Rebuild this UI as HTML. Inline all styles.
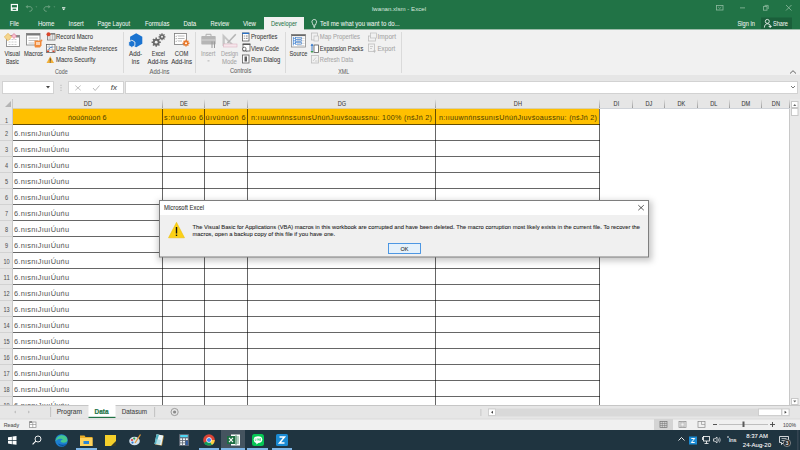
<!DOCTYPE html>
<html><head><meta charset="utf-8"><style>
*{margin:0;padding:0}
html,body{width:800px;height:450px;overflow:hidden;background:#fff;font-family:"Liberation Sans",sans-serif}
text{font-family:"Liberation Sans",sans-serif}
</style></head><body>
<svg width="800" height="450" viewBox="0 0 800 450" style="position:absolute;left:0;top:0">
<rect x="0" y="0" width="800" height="29" fill="#217346" />
<rect x="0" y="29" width="800" height="1" fill="#9dbcaa" />
<g transform="translate(10.8,3.9)"><rect x="0" y="0" width="7.2" height="7" fill="#fff"/><rect x="1.1" y="1.2" width="5" height="2.3" fill="#217346"/><rect x="1.8" y="4.8" width="3.6" height="1.2" fill="#217346"/></g>
<g transform="translate(25.5,4.5)"><path d="M1.8 2.2 H4.5 C7.3 2.2 7.6 6.8 4.3 6.8 H3.8" fill="none" stroke="#6aa07f" stroke-width="1"/><path d="M0 2.2 L2.3 0.4 V4z" fill="#6aa07f"/></g>
<g transform="translate(35.5,6.5)"><path d="M0 0 H1.8 L0.9 1z" fill="#6aa07f"/></g>
<g transform="translate(43,4.5)"><path d="M5.8 2.2 H3.1 C0.3 2.2 0 6.8 3.3 6.8 H3.8" fill="none" stroke="#6aa07f" stroke-width="1"/><path d="M7.6 2.2 L5.3 0.4 V4z" fill="#6aa07f"/></g>
<g transform="translate(53.5,6.5)"><path d="M0 0 H1.8 L0.9 1z" fill="#6aa07f"/></g>
<g transform="translate(62,7)"><rect x="0" y="0" width="3.4" height="0.7" fill="#fff"/><path d="M0 1.5 H3.4 L1.7 3.2z" fill="#fff"/></g>
<text x="372" y="11" font-size="6" fill="#d9e8df"  font-weight="normal" font-family="Liberation Sans" textLength="54" lengthAdjust="spacingAndGlyphs" >lwanan.xlsm - Excel</text>
<g transform="translate(716,5)"><rect x="0.5" y="0.5" width="6.5" height="4.5" fill="none" stroke="#8fbba0" stroke-width="0.8"/><path d="M2.2 2 L3.75 3.5 L5.3 2" fill="none" stroke="#8fbba0" stroke-width="0.7"/></g>
<rect x="740" y="7.5" width="5" height="0.8" fill="#8fbba0" />
<g transform="translate(763,5)"><rect x="0.4" y="1.6" width="3.6" height="3.6" fill="none" stroke="#8fbba0" stroke-width="0.8"/><path d="M1.6 0.4 H5.2 V4" fill="none" stroke="#8fbba0" stroke-width="0.8"/></g>
<g transform="translate(786,5)"><path d="M0 0 L5.5 5.5 M5.5 0 L0 5.5" stroke="#8fbba0" stroke-width="0.8"/></g>
<text x="9.8" y="25.9" font-size="6.3" fill="#f2f7f4" stroke="#f2f7f4" stroke-width="0.03" font-weight="normal" font-family="Liberation Sans" textLength="9.2" lengthAdjust="spacingAndGlyphs" >File</text>
<text x="37.9" y="25.9" font-size="6.3" fill="#f2f7f4" stroke="#f2f7f4" stroke-width="0.03" font-weight="normal" font-family="Liberation Sans" textLength="16.5" lengthAdjust="spacingAndGlyphs" >Home</text>
<text x="68.6" y="25.9" font-size="6.3" fill="#f2f7f4" stroke="#f2f7f4" stroke-width="0.03" font-weight="normal" font-family="Liberation Sans" textLength="15.100000000000009" lengthAdjust="spacingAndGlyphs" >Insert</text>
<text x="97.5" y="25.9" font-size="6.3" fill="#f2f7f4" stroke="#f2f7f4" stroke-width="0.03" font-weight="normal" font-family="Liberation Sans" textLength="32.5" lengthAdjust="spacingAndGlyphs" >Page Layout</text>
<text x="144.9" y="25.9" font-size="6.3" fill="#f2f7f4" stroke="#f2f7f4" stroke-width="0.03" font-weight="normal" font-family="Liberation Sans" textLength="24.5" lengthAdjust="spacingAndGlyphs" >Formulas</text>
<text x="183.4" y="25.9" font-size="6.3" fill="#f2f7f4" stroke="#f2f7f4" stroke-width="0.03" font-weight="normal" font-family="Liberation Sans" textLength="12.799999999999983" lengthAdjust="spacingAndGlyphs" >Data</text>
<text x="210.5" y="25.9" font-size="6.3" fill="#f2f7f4" stroke="#f2f7f4" stroke-width="0.03" font-weight="normal" font-family="Liberation Sans" textLength="18.69999999999999" lengthAdjust="spacingAndGlyphs" >Review</text>
<text x="242.9" y="25.9" font-size="6.3" fill="#f2f7f4" stroke="#f2f7f4" stroke-width="0.03" font-weight="normal" font-family="Liberation Sans" textLength="13.099999999999994" lengthAdjust="spacingAndGlyphs" >View</text>
<rect x="264" y="17" width="40" height="13" fill="#f1f1f1" />
<text x="270.9" y="25.9" font-size="6.3" fill="#217346" stroke="#217346" stroke-width="0.03" font-weight="normal" font-family="Liberation Sans" textLength="26.100000000000023" lengthAdjust="spacingAndGlyphs" >Developer</text>
<g transform="translate(311.5,19)"><path d="M2.75 0.5 C1.2 0.5 0.4 1.7 0.4 2.9 C0.4 4.2 1.6 4.8 1.6 6.2 H3.9 C3.9 4.8 5.1 4.2 5.1 2.9 C5.1 1.7 4.3 0.5 2.75 0.5z M1.8 7.4 H3.7 M2.1 8.4 H3.4" fill="none" stroke="#fff" stroke-width="0.75"/></g>
<text x="320" y="25.9" font-size="6.3" fill="#f2f7f4" stroke="#f2f7f4" stroke-width="0.03" font-weight="normal" font-family="Liberation Sans" textLength="79.69999999999999" lengthAdjust="spacingAndGlyphs" >Tell me what you want to do...</text>
<text x="737.5" y="25.9" font-size="6.3" fill="#f2f7f4" stroke="#f2f7f4" stroke-width="0.03" font-weight="normal" font-family="Liberation Sans" textLength="17.5" lengthAdjust="spacingAndGlyphs" >Sign in</text>
<rect x="761" y="17.5" width="31" height="11.5" fill="#1a5f3a" />
<g transform="translate(764,19)"><circle cx="3.3" cy="2.4" r="2" fill="none" stroke="#fff" stroke-width="0.8"/><path d="M0.4 8.6 C0.4 6 1.8 4.8 3.3 4.8 C4.6 4.8 5.4 5.2 6 6" fill="none" stroke="#fff" stroke-width="0.8"/><path d="M4.6 7.4 H7.8 M6.2 5.8 V9" stroke="#fff" stroke-width="0.8"/></g>
<text x="773" y="25.9" font-size="6.3" fill="#f2f7f4" stroke="#f2f7f4" stroke-width="0.03" font-weight="normal" font-family="Liberation Sans" textLength="15" lengthAdjust="spacingAndGlyphs" >Share</text>
<rect x="0" y="30" width="800" height="45" fill="#f1f1f1" />
<rect x="123" y="32" width="1" height="41" fill="#dadada" />
<rect x="195" y="32" width="1" height="41" fill="#dadada" />
<rect x="285" y="32" width="1" height="41" fill="#dadada" />
<rect x="401" y="32" width="1" height="41" fill="#dadada" />
<g transform="translate(4,33)"><rect x="2.5" y="2.5" width="13" height="11" fill="#fff" stroke="#8a8a8a" stroke-width="0.9"/>
<path d="M4.5 6.5 H13.5 M4.5 9 H13.5 M4.5 11.5 H13.5" stroke="#c0c0c0" stroke-width="0.8" stroke-dasharray="2 1"/>
<rect x="12" y="2.5" width="3.5" height="2" fill="#8a8a8a"/>
<path d="M0.3 4 L4 0.3 L7.7 4 L4 7.7z" fill="#f4d58e" stroke="#e3ac45" stroke-width="0.6"/>
<path d="M7.5 3 L10 0.5 L12.5 3 L10 5.5z" fill="#f6c3d0" stroke="#dc5c80" stroke-width="0.6"/></g>
<g transform="translate(26,33)"><rect x="0.5" y="0.5" width="13.5" height="11.5" fill="#fff" stroke="#8a8a8a" stroke-width="0.9"/>
<rect x="0.5" y="0.5" width="13.5" height="2" fill="#7a7a7a"/>
<path d="M2.5 5 H12 M2.5 7.5 H12 M2.5 10 H8" stroke="#a8a8a8" stroke-width="0.7"/>
<path d="M8.5 7.5 H15.5 V12.5 L14 14.5 H9 L8.5 13z" fill="#f18a3a"/>
<path d="M10 9 H14 V12 H10z" fill="#fbd2b0"/>
<circle cx="15.5" cy="7.5" r="0.9" fill="#f18a3a"/></g>
<text x="4.5" y="55.8" font-size="6.5" fill="#3c3c3c" stroke="#3c3c3c" stroke-width="0.07" font-weight="normal" font-family="Liberation Sans" textLength="15.5" lengthAdjust="spacingAndGlyphs" >Visual</text>
<text x="6" y="63.5" font-size="6.5" fill="#3c3c3c" stroke="#3c3c3c" stroke-width="0.07" font-weight="normal" font-family="Liberation Sans" textLength="13" lengthAdjust="spacingAndGlyphs" >Basic</text>
<text x="24" y="55.8" font-size="6.5" fill="#3c3c3c" stroke="#3c3c3c" stroke-width="0.07" font-weight="normal" font-family="Liberation Sans" textLength="19" lengthAdjust="spacingAndGlyphs" >Macros</text>
<g transform="translate(46.5,32)"><rect x="1" y="2" width="7.5" height="6" fill="#fff" stroke="#707070" stroke-width="0.8"/>
<path d="M1 4 H8.5 M1 6 H8.5 M3.5 2 V8 M6 2 V8" stroke="#9a9a9a" stroke-width="0.5"/>
<rect x="4" y="1.2" width="4.5" height="1.2" fill="#707070"/>
<circle cx="2" cy="2.2" r="2" fill="#d9462b"/></g>
<text x="56" y="39" font-size="6.5" fill="#3c3c3c" stroke="#3c3c3c" stroke-width="0.07" font-weight="normal" font-family="Liberation Sans" textLength="37" lengthAdjust="spacingAndGlyphs" >Record Macro</text>
<g transform="translate(46,44)"><rect x="0.5" y="0.5" width="8.5" height="8" fill="#fff" stroke="#606060" stroke-width="0.8"/>
<path d="M0.5 3 H9 M0.5 5.8 H9 M3.2 0.5 V8.5 M6.2 0.5 V8.5" stroke="#909090" stroke-width="0.5"/>
<path d="M2.5 5.5 Q4 3 6.5 3" stroke="#2b73c9" stroke-width="0.9" fill="none"/>
<rect x="1" y="6.5" width="2" height="1.5" fill="#d9462b"/><rect x="6.5" y="6.5" width="2" height="1.5" fill="#d9462b"/></g>
<text x="56" y="50.5" font-size="6.5" fill="#3c3c3c" stroke="#3c3c3c" stroke-width="0.07" font-weight="normal" font-family="Liberation Sans" textLength="61.2" lengthAdjust="spacingAndGlyphs" >Use Relative References</text>
<g transform="translate(46.5,56)"><path d="M3.75 0.3 L7.5 7 H0z" fill="#f2b13a"/><path d="M3.75 2.3 V4.8" stroke="#333" stroke-width="0.9"/><rect x="3.25" y="5.5" width="1" height="1" fill="#333"/></g>
<text x="56" y="61.8" font-size="6.5" fill="#3c3c3c" stroke="#3c3c3c" stroke-width="0.07" font-weight="normal" font-family="Liberation Sans" textLength="39.5" lengthAdjust="spacingAndGlyphs" >Macro Security</text>
<text x="55" y="73.5" font-size="6.5" fill="#666" stroke="#666" stroke-width="0.07" font-weight="normal" font-family="Liberation Sans" textLength="12.799999999999997" lengthAdjust="spacingAndGlyphs" >Code</text>
<path d="M136.2 33.3 L142.3 36.8 V43.8 L136.2 47.3 L130.1 43.8 V36.8z" fill="#1a73d0"/>
<path d="M131.8 40.2 L134.9 42 V45.6 L131.8 47.4 L128.7 45.6 V42z" fill="#1a73d0" stroke="#f1f1f1" stroke-width="0.9"/>
<g transform="translate(151,33)"><g fill="#6a6a6a"><circle cx="5.2" cy="9.2" r="3.4"/><circle cx="11" cy="3.8" r="2.6"/></g>
<g stroke="#6a6a6a" stroke-width="1.5"><path d="M5.2 4.6 V13.8 M0.6 9.2 H9.8 M1.95 5.95 L8.45 12.45 M8.45 5.95 L1.95 12.45"/></g>
<g stroke="#6a6a6a" stroke-width="1.2"><path d="M11 0.3 V7.3 M7.5 3.8 H14.5 M8.5 1.3 L13.5 6.3 M13.5 1.3 L8.5 6.3"/></g>
<circle cx="5.2" cy="9.2" r="1.4" fill="#f1f1f1"/><circle cx="11" cy="3.8" r="1" fill="#f1f1f1"/></g>
<g transform="translate(174,33)"><rect x="0.5" y="0.5" width="12" height="11" fill="#fff" stroke="#7a7a7a" stroke-width="0.8"/>
<path d="M4 3 H10.5 M4 5.5 H10.5 M4 8 H8" stroke="#8a8a8a" stroke-width="0.6"/>
<path d="M1.6 3 l.6 .6 l.9 -1.1 M1.6 5.5 l.6 .6 l.9 -1.1 M1.6 8 l.6 .6 l.9 -1.1" stroke="#555" stroke-width="0.45" fill="none"/>
<g stroke="#e8782a" stroke-width="1.4"><path d="M12 6.8 V13.6 M8.6 10.2 H15.4 M9.6 7.8 L14.4 12.6 M14.4 7.8 L9.6 12.6"/></g>
<circle cx="12" cy="10.2" r="2.4" fill="#e8782a"/><circle cx="12" cy="10.2" r="1" fill="#fff"/></g>
<text x="129" y="55.9" font-size="6.5" fill="#3c3c3c" stroke="#3c3c3c" stroke-width="0.07" font-weight="normal" font-family="Liberation Sans" textLength="13.199999999999989" lengthAdjust="spacingAndGlyphs" >Add-</text>
<text x="131.8" y="63.8" font-size="6.5" fill="#3c3c3c" stroke="#3c3c3c" stroke-width="0.07" font-weight="normal" font-family="Liberation Sans" textLength="7.599999999999994" lengthAdjust="spacingAndGlyphs" >ins</text>
<text x="151.8" y="55.9" font-size="6.5" fill="#3c3c3c" stroke="#3c3c3c" stroke-width="0.07" font-weight="normal" font-family="Liberation Sans" textLength="13.199999999999989" lengthAdjust="spacingAndGlyphs" >Excel</text>
<text x="147.6" y="63.8" font-size="6.5" fill="#3c3c3c" stroke="#3c3c3c" stroke-width="0.07" font-weight="normal" font-family="Liberation Sans" textLength="20.5" lengthAdjust="spacingAndGlyphs" >Add-ins</text>
<text x="174.8" y="55.9" font-size="6.5" fill="#3c3c3c" stroke="#3c3c3c" stroke-width="0.07" font-weight="normal" font-family="Liberation Sans" textLength="13.5" lengthAdjust="spacingAndGlyphs" >COM</text>
<text x="171.2" y="63.8" font-size="6.5" fill="#3c3c3c" stroke="#3c3c3c" stroke-width="0.07" font-weight="normal" font-family="Liberation Sans" textLength="20.80000000000001" lengthAdjust="spacingAndGlyphs" >Add-ins</text>
<text x="149.5" y="73.6" font-size="6.5" fill="#666" stroke="#666" stroke-width="0.07" font-weight="normal" font-family="Liberation Sans" textLength="20.0" lengthAdjust="spacingAndGlyphs" >Add-ins</text>
<g transform="translate(201,33.5)"><path d="M5 2.5 V0.8 H10 V2.5" fill="none" stroke="#b0b0b0" stroke-width="1"/>
<rect x="0.3" y="2.5" width="14.4" height="8.5" rx="0.8" fill="#b5b5b5"/><rect x="0.3" y="6" width="14.4" height="1" fill="#d6d6d6"/>
<path d="M11 8 V14.5 M13.5 8 V14.5" stroke="#9a9a9a" stroke-width="1"/></g>
<text x="200.9" y="56.1" font-size="6.5" fill="#a6a6a6" stroke="#a6a6a6" stroke-width="0.07" font-weight="normal" font-family="Liberation Sans" textLength="14.5" lengthAdjust="spacingAndGlyphs" >Insert</text>
<rect x="207.5" y="60.5" width="2" height="0.8" fill="#a6a6a6" />
<g transform="translate(222,33)"><path d="M0.5 0.5 V13 H13z M2.8 5.5 V10.8 H8.1z" fill="#c6c6c6" fill-rule="evenodd"/>
<path d="M5.5 10 L13.8 1.2" stroke="#b4b4b4" stroke-width="1.6"/>
<rect x="1.5" y="11" width="13.5" height="3" fill="#f6e6eb" stroke="#dbaabb" stroke-width="0.5"/></g>
<text x="220.9" y="56" font-size="6.5" fill="#a6a6a6" stroke="#a6a6a6" stroke-width="0.07" font-weight="normal" font-family="Liberation Sans" textLength="17.19999999999999" lengthAdjust="spacingAndGlyphs" >Design</text>
<text x="221.9" y="63.6" font-size="6.5" fill="#a6a6a6" stroke="#a6a6a6" stroke-width="0.07" font-weight="normal" font-family="Liberation Sans" textLength="15.0" lengthAdjust="spacingAndGlyphs" >Mode</text>
<g transform="translate(242,32.5)"><rect x="0.5" y="0.5" width="6.5" height="8" fill="#fff" stroke="#5a5a5a" stroke-width="0.8"/><rect x="0.2" y="0.2" width="7" height="1.3" fill="#2b73c9"/>
<path d="M1.8 3.5 H2.8 M1.8 5.8 H2.8 M3.8 3.5 H5.6 M3.8 5.8 H5.6" stroke="#444" stroke-width="0.7"/></g>
<text x="250.9" y="39" font-size="6.5" fill="#3c3c3c" stroke="#3c3c3c" stroke-width="0.07" font-weight="normal" font-family="Liberation Sans" textLength="26.599999999999994" lengthAdjust="spacingAndGlyphs" >Properties</text>
<g transform="translate(241.5,43.5)"><rect x="1.5" y="0.5" width="7" height="7" fill="#fff" stroke="#5a5a5a" stroke-width="0.8"/><rect x="1.2" y="0.2" width="7.6" height="1.3" fill="#5a5a5a"/>
<circle cx="2.8" cy="5.5" r="1.8" fill="#fff" stroke="#444" stroke-width="0.7"/><path d="M4 6.8 L5.3 8.1" stroke="#444" stroke-width="0.8"/></g>
<text x="250.9" y="50.5" font-size="6.5" fill="#3c3c3c" stroke="#3c3c3c" stroke-width="0.07" font-weight="normal" font-family="Liberation Sans" textLength="28.099999999999994" lengthAdjust="spacingAndGlyphs" >View Code</text>
<g transform="translate(242,54.5)"><rect x="0.5" y="0.5" width="6.5" height="8" fill="#fff" stroke="#5a5a5a" stroke-width="0.8"/><rect x="2.5" y="2" width="2.5" height="5" fill="#5a5a5a"/></g>
<text x="250.9" y="61.75" font-size="6.5" fill="#3c3c3c" stroke="#3c3c3c" stroke-width="0.07" font-weight="normal" font-family="Liberation Sans" textLength="29.349999999999994" lengthAdjust="spacingAndGlyphs" >Run Dialog</text>
<text x="230" y="73.25" font-size="6.5" fill="#666" stroke="#666" stroke-width="0.07" font-weight="normal" font-family="Liberation Sans" textLength="21.25" lengthAdjust="spacingAndGlyphs" >Controls</text>
<g transform="translate(291,34)"><rect x="0.5" y="0.5" width="14" height="12.5" fill="#fff" stroke="#8a8a8a" stroke-width="0.8"/><rect x="0.5" y="0.5" width="14" height="1.6" fill="#6a6a6a"/>
<path d="M6 4.3 H13.5 M6 6.8 H13.5 M6 9.3 H13.5 M6 11.6 H13.5" stroke="#a6a6a6" stroke-width="0.5"/>
<path d="M2.3 3 V11.5 M2.3 4.3 H4.5 M2.3 6.8 H4.5 M2.3 9.3 H4.5" stroke="#2b73c9" stroke-width="0.7" fill="none"/>
<rect x="4.5" y="3.4" width="6" height="1.8" fill="none" stroke="#2b73c9" stroke-width="0.55"/>
<rect x="4.5" y="5.9" width="6" height="1.8" fill="none" stroke="#2b73c9" stroke-width="0.55"/>
<rect x="4.5" y="8.4" width="6" height="1.8" fill="none" stroke="#2b73c9" stroke-width="0.55"/></g>
<text x="289.5" y="55.75" font-size="6.5" fill="#3c3c3c" stroke="#3c3c3c" stroke-width="0.07" font-weight="normal" font-family="Liberation Sans" textLength="18.0" lengthAdjust="spacingAndGlyphs" >Source</text>
<g transform="translate(311,32.5)"><rect x="0.5" y="0.5" width="6" height="7" fill="none" stroke="#bdbdbd" stroke-width="0.8"/><rect x="3" y="3.5" width="4.5" height="5" fill="#f1f1f1" stroke="#bdbdbd" stroke-width="0.7"/></g>
<text x="319.8" y="39.25" font-size="6.5" fill="#a6a6a6" stroke="#a6a6a6" stroke-width="0.07" font-weight="normal" font-family="Liberation Sans" textLength="40.19999999999999" lengthAdjust="spacingAndGlyphs" >Map Properties</text>
<g transform="translate(310.5,43.5)"><rect x="3.5" y="1.5" width="4.5" height="7.5" fill="#fff" stroke="#555" stroke-width="0.8"/>
<path d="M1.5 1 V8.5" stroke="#2b73c9" stroke-width="0.9"/><path d="M0 2.2 L1.5 0 L3 2.2z" fill="#2b73c9"/><path d="M0 7.6 L1.5 9.8 L3 7.6z" fill="#3c9a4a"/></g>
<text x="319.8" y="50.5" font-size="6.5" fill="#3c3c3c" stroke="#3c3c3c" stroke-width="0.07" font-weight="normal" font-family="Liberation Sans" textLength="43.5" lengthAdjust="spacingAndGlyphs" >Expansion Packs</text>
<g transform="translate(311,55)"><rect x="0.5" y="0.5" width="7" height="7.5" fill="none" stroke="#bdbdbd" stroke-width="0.8"/><path d="M2 6 L5 2.5 M4 6 H6.5" stroke="#bdbdbd" stroke-width="0.7"/></g>
<text x="319.8" y="61.75" font-size="6.5" fill="#a6a6a6" stroke="#a6a6a6" stroke-width="0.07" font-weight="normal" font-family="Liberation Sans" textLength="33.44999999999999" lengthAdjust="spacingAndGlyphs" >Refresh Data</text>
<g transform="translate(368,32.5)"><rect x="0.5" y="3.5" width="7" height="5" fill="none" stroke="#bdbdbd" stroke-width="0.8"/><rect x="2.5" y="0.5" width="6" height="5" fill="#f1f1f1" stroke="#bdbdbd" stroke-width="0.7"/></g>
<text x="377.5" y="39.25" font-size="6.5" fill="#a6a6a6" stroke="#a6a6a6" stroke-width="0.07" font-weight="normal" font-family="Liberation Sans" textLength="18.5" lengthAdjust="spacingAndGlyphs" >Import</text>
<g transform="translate(368,43.5)"><rect x="0.5" y="0.5" width="6" height="7.5" fill="none" stroke="#bdbdbd" stroke-width="0.8"/><path d="M5 7 L8 7 L6.5 9.5z" fill="#bdbdbd"/><path d="M2 3 H5 M2 5 H4" stroke="#bdbdbd" stroke-width="0.7"/></g>
<text x="377.5" y="50.5" font-size="6.5" fill="#a6a6a6" stroke="#a6a6a6" stroke-width="0.07" font-weight="normal" font-family="Liberation Sans" textLength="17.75" lengthAdjust="spacingAndGlyphs" >Export</text>
<text x="338.25" y="73.5" font-size="6.5" fill="#666" stroke="#666" stroke-width="0.07" font-weight="normal" font-family="Liberation Sans" textLength="10.949999999999989" lengthAdjust="spacingAndGlyphs" >XML</text>
<g transform="translate(789.5,70)"><path d="M0.5 3.5 L3.5 0.7 L6.5 3.5" fill="none" stroke="#555" stroke-width="0.9"/></g>
<rect x="0" y="75" width="800" height="24" fill="#e6e6e6" />
<rect x="2.5" y="81.5" width="51" height="12" fill="#fff" stroke="#d2d2d2" stroke-width="1"/>
<path d="M46 86 H50 L48 88.5z" fill="#444"/>
<rect x="60.5" y="84.8" width="1" height="1" fill="#aaa" />
<rect x="60.5" y="87.3" width="1" height="1" fill="#aaa" />
<rect x="60.5" y="89.8" width="1" height="1" fill="#aaa" />
<rect x="68.5" y="81.5" width="55" height="12" fill="#fff" stroke="#d2d2d2" stroke-width="1"/>
<path d="M75.3 85.5 L80.7 90.3 M80.7 85.5 L75.3 90.3" stroke="#a6a6a6" stroke-width="0.7"/>
<path d="M93 88 L95.2 90.5 L99.5 85.5" fill="none" stroke="#a6a6a6" stroke-width="0.8"/>
<text x="110.8" y="90" font-size="7.2" font-style="italic" font-family="Liberation Serif" fill="#555" stroke="#555" stroke-width="0.1" textLength="6.2" lengthAdjust="spacingAndGlyphs">fx</text>
<rect x="125.5" y="81.5" width="672" height="12" fill="#fff" stroke="#d2d2d2" stroke-width="1"/>
<path d="M791 86 L793 88 L795 86" fill="none" stroke="#555" stroke-width="0.8"/>
<defs><linearGradient id="hsep" x1="0" y1="0" x2="0" y2="1"><stop offset="0" stop-color="#e0e0e0"/><stop offset="1" stop-color="#9c9c9c"/></linearGradient></defs>
<rect x="0" y="99" width="790" height="306" fill="#fff" />
<rect x="0" y="99" width="790" height="9.5" fill="#e6e6e6" />
<rect x="0" y="108" width="790" height="0.8" fill="#c6cbd3" />
<rect x="0" y="99" width="12" height="306" fill="#e6e6e6" />
<rect x="12" y="99" width="1" height="306" fill="#c8c8c8" />
<path d="M11 101 V107 H5z" fill="#b4b4b4"/>
<text x="83.85575" y="106" font-size="7" fill="#3a3a3a" stroke="#3a3a3a" stroke-width="0.07" font-weight="normal" font-family="Liberation Sans" textLength="8.08850000000001" lengthAdjust="spacingAndGlyphs" >DD</text>
<rect x="162" y="99.5" width="1" height="8.5" fill="url(#hsep)" />
<text x="180.0101875" y="106" font-size="7" fill="#3a3a3a" stroke="#3a3a3a" stroke-width="0.07" font-weight="normal" font-family="Liberation Sans" textLength="7.77962500000001" lengthAdjust="spacingAndGlyphs" >DE</text>
<rect x="204" y="99.5" width="1" height="8.5" fill="url(#hsep)" />
<text x="222.6676875" y="106" font-size="7" fill="#3a3a3a" stroke="#3a3a3a" stroke-width="0.07" font-weight="normal" font-family="Liberation Sans" textLength="7.464625000000012" lengthAdjust="spacingAndGlyphs" >DF</text>
<rect x="247" y="99.5" width="1" height="8.5" fill="url(#hsep)" />
<text x="337.7" y="106" font-size="7" fill="#3a3a3a" stroke="#3a3a3a" stroke-width="0.07" font-weight="normal" font-family="Liberation Sans" textLength="8.399999999999977" lengthAdjust="spacingAndGlyphs" >DG</text>
<rect x="435" y="99.5" width="1" height="8.5" fill="url(#hsep)" />
<text x="513.85575" y="106" font-size="7" fill="#3a3a3a" stroke="#3a3a3a" stroke-width="0.07" font-weight="normal" font-family="Liberation Sans" textLength="8.088500000000067" lengthAdjust="spacingAndGlyphs" >DH</text>
<rect x="599" y="99.5" width="1" height="8.5" fill="url(#hsep)" />
<text x="613.6" y="106" font-size="7" fill="#3a3a3a" stroke="#3a3a3a" stroke-width="0.07" font-weight="normal" font-family="Liberation Sans" textLength="5.599999999999909" lengthAdjust="spacingAndGlyphs" >DI</text>
<rect x="632" y="99.5" width="1" height="8.5" fill="url(#hsep)" />
<text x="645.4778749999999" y="106" font-size="7" fill="#3a3a3a" stroke="#3a3a3a" stroke-width="0.07" font-weight="normal" font-family="Liberation Sans" textLength="6.844250000000102" lengthAdjust="spacingAndGlyphs" >DJ</text>
<rect x="664" y="99.5" width="1" height="8.5" fill="url(#hsep)" />
<text x="677.5101875" y="106" font-size="7" fill="#3a3a3a" stroke="#3a3a3a" stroke-width="0.07" font-weight="normal" font-family="Liberation Sans" textLength="7.779624999999896" lengthAdjust="spacingAndGlyphs" >DK</text>
<rect x="697" y="99.5" width="1" height="8.5" fill="url(#hsep)" />
<text x="710.3208125" y="106" font-size="7" fill="#3a3a3a" stroke="#3a3a3a" stroke-width="0.07" font-weight="normal" font-family="Liberation Sans" textLength="7.158374999999978" lengthAdjust="spacingAndGlyphs" >DL</text>
<rect x="729" y="99.5" width="1" height="8.5" fill="url(#hsep)" />
<text x="741.5455625" y="106" font-size="7" fill="#3a3a3a" stroke="#3a3a3a" stroke-width="0.07" font-weight="normal" font-family="Liberation Sans" textLength="8.708875000000035" lengthAdjust="spacingAndGlyphs" >DM</text>
<rect x="761" y="99.5" width="1" height="8.5" fill="url(#hsep)" />
<text x="771.85575" y="106" font-size="7" fill="#3a3a3a" stroke="#3a3a3a" stroke-width="0.07" font-weight="normal" font-family="Liberation Sans" textLength="8.088500000000067" lengthAdjust="spacingAndGlyphs" >DN</text>
<rect x="789" y="99.5" width="1" height="8.5" fill="url(#hsep)" />
<rect x="13" y="108.8" width="586" height="16.2" fill="#ffc000" />
<rect x="0" y="124" width="12" height="1" fill="#d2d2d2" />
<rect x="13" y="124" width="587" height="1" fill="#000" fill-opacity="0.6"/>
<text x="5.05" y="122.5" font-size="6.5" fill="#505050" stroke="#505050" stroke-width="0.04" font-weight="normal" font-family="Liberation Sans" textLength="3.1000000000000005" lengthAdjust="spacingAndGlyphs" >1</text>
<rect x="0" y="140" width="12" height="1" fill="#d2d2d2" />
<rect x="13" y="140" width="587" height="1" fill="#000" fill-opacity="0.6"/>
<text x="5.05" y="136" font-size="6.5" fill="#505050" stroke="#505050" stroke-width="0.04" font-weight="normal" font-family="Liberation Sans" textLength="3.1000000000000005" lengthAdjust="spacingAndGlyphs" >2</text>
<text x="14" y="135.8" font-size="7.4" fill="#505050"  font-weight="normal" font-family="Liberation Sans" textLength="55" lengthAdjust="spacing" >6.nısnıJıuıÚuńu</text>
<rect x="0" y="156" width="12" height="1" fill="#d2d2d2" />
<rect x="13" y="156" width="587" height="1" fill="#000" fill-opacity="0.6"/>
<text x="5.05" y="152" font-size="6.5" fill="#505050" stroke="#505050" stroke-width="0.04" font-weight="normal" font-family="Liberation Sans" textLength="3.1000000000000005" lengthAdjust="spacingAndGlyphs" >3</text>
<text x="14" y="151.8" font-size="7.4" fill="#505050"  font-weight="normal" font-family="Liberation Sans" textLength="55" lengthAdjust="spacing" >6.nısnıJıuıÚuńu</text>
<rect x="0" y="172" width="12" height="1" fill="#d2d2d2" />
<rect x="13" y="172" width="587" height="1" fill="#000" fill-opacity="0.6"/>
<text x="5.05" y="168" font-size="6.5" fill="#505050" stroke="#505050" stroke-width="0.04" font-weight="normal" font-family="Liberation Sans" textLength="3.1000000000000005" lengthAdjust="spacingAndGlyphs" >4</text>
<text x="14" y="167.8" font-size="7.4" fill="#505050"  font-weight="normal" font-family="Liberation Sans" textLength="55" lengthAdjust="spacing" >6.nısnıJıuıÚuńu</text>
<rect x="0" y="188" width="12" height="1" fill="#d2d2d2" />
<rect x="13" y="188" width="587" height="1" fill="#000" fill-opacity="0.6"/>
<text x="5.05" y="184" font-size="6.5" fill="#505050" stroke="#505050" stroke-width="0.04" font-weight="normal" font-family="Liberation Sans" textLength="3.1000000000000005" lengthAdjust="spacingAndGlyphs" >5</text>
<text x="14" y="183.8" font-size="7.4" fill="#505050"  font-weight="normal" font-family="Liberation Sans" textLength="55" lengthAdjust="spacing" >6.nısnıJıuıÚuńu</text>
<rect x="0" y="204" width="12" height="1" fill="#d2d2d2" />
<rect x="13" y="204" width="587" height="1" fill="#000" fill-opacity="0.6"/>
<text x="5.05" y="200" font-size="6.5" fill="#505050" stroke="#505050" stroke-width="0.04" font-weight="normal" font-family="Liberation Sans" textLength="3.1000000000000005" lengthAdjust="spacingAndGlyphs" >6</text>
<text x="14" y="199.8" font-size="7.4" fill="#505050"  font-weight="normal" font-family="Liberation Sans" textLength="55" lengthAdjust="spacing" >6.nısnıJıuıÚuńu</text>
<rect x="0" y="220" width="12" height="1" fill="#d2d2d2" />
<rect x="13" y="220" width="587" height="1" fill="#000" fill-opacity="0.6"/>
<text x="5.05" y="216" font-size="6.5" fill="#505050" stroke="#505050" stroke-width="0.04" font-weight="normal" font-family="Liberation Sans" textLength="3.1000000000000005" lengthAdjust="spacingAndGlyphs" >7</text>
<text x="14" y="215.8" font-size="7.4" fill="#505050"  font-weight="normal" font-family="Liberation Sans" textLength="55" lengthAdjust="spacing" >6.nısnıJıuıÚuńu</text>
<rect x="0" y="236" width="12" height="1" fill="#d2d2d2" />
<rect x="13" y="236" width="587" height="1" fill="#000" fill-opacity="0.6"/>
<text x="5.05" y="232" font-size="6.5" fill="#505050" stroke="#505050" stroke-width="0.04" font-weight="normal" font-family="Liberation Sans" textLength="3.1000000000000005" lengthAdjust="spacingAndGlyphs" >8</text>
<text x="14" y="231.8" font-size="7.4" fill="#505050"  font-weight="normal" font-family="Liberation Sans" textLength="55" lengthAdjust="spacing" >6.nısnıJıuıÚuńu</text>
<rect x="0" y="252" width="12" height="1" fill="#d2d2d2" />
<rect x="13" y="252" width="587" height="1" fill="#000" fill-opacity="0.6"/>
<text x="5.05" y="248" font-size="6.5" fill="#505050" stroke="#505050" stroke-width="0.04" font-weight="normal" font-family="Liberation Sans" textLength="3.1000000000000005" lengthAdjust="spacingAndGlyphs" >9</text>
<text x="14" y="247.8" font-size="7.4" fill="#505050"  font-weight="normal" font-family="Liberation Sans" textLength="55" lengthAdjust="spacing" >6.nısnıJıuıÚuńu</text>
<rect x="0" y="268" width="12" height="1" fill="#d2d2d2" />
<rect x="13" y="268" width="587" height="1" fill="#000" fill-opacity="0.6"/>
<text x="3.4999999999999996" y="264" font-size="6.5" fill="#505050" stroke="#505050" stroke-width="0.04" font-weight="normal" font-family="Liberation Sans" textLength="6.199999999999999" lengthAdjust="spacingAndGlyphs" >10</text>
<text x="14" y="263.8" font-size="7.4" fill="#505050"  font-weight="normal" font-family="Liberation Sans" textLength="55" lengthAdjust="spacing" >6.nısnıJıuıÚuńu</text>
<rect x="0" y="284" width="12" height="1" fill="#d2d2d2" />
<rect x="13" y="284" width="587" height="1" fill="#000" fill-opacity="0.6"/>
<text x="3.4999999999999996" y="280" font-size="6.5" fill="#505050" stroke="#505050" stroke-width="0.04" font-weight="normal" font-family="Liberation Sans" textLength="6.199999999999999" lengthAdjust="spacingAndGlyphs" >11</text>
<text x="14" y="279.8" font-size="7.4" fill="#505050"  font-weight="normal" font-family="Liberation Sans" textLength="55" lengthAdjust="spacing" >6.nısnıJıuıÚuńu</text>
<rect x="0" y="300" width="12" height="1" fill="#d2d2d2" />
<rect x="13" y="300" width="587" height="1" fill="#000" fill-opacity="0.6"/>
<text x="3.4999999999999996" y="296" font-size="6.5" fill="#505050" stroke="#505050" stroke-width="0.04" font-weight="normal" font-family="Liberation Sans" textLength="6.199999999999999" lengthAdjust="spacingAndGlyphs" >12</text>
<text x="14" y="295.8" font-size="7.4" fill="#505050"  font-weight="normal" font-family="Liberation Sans" textLength="55" lengthAdjust="spacing" >6.nısnıJıuıÚuńu</text>
<rect x="0" y="316" width="12" height="1" fill="#d2d2d2" />
<rect x="13" y="316" width="587" height="1" fill="#000" fill-opacity="0.6"/>
<text x="3.4999999999999996" y="312" font-size="6.5" fill="#505050" stroke="#505050" stroke-width="0.04" font-weight="normal" font-family="Liberation Sans" textLength="6.199999999999999" lengthAdjust="spacingAndGlyphs" >13</text>
<text x="14" y="311.8" font-size="7.4" fill="#505050"  font-weight="normal" font-family="Liberation Sans" textLength="55" lengthAdjust="spacing" >6.nısnıJıuıÚuńu</text>
<rect x="0" y="332" width="12" height="1" fill="#d2d2d2" />
<rect x="13" y="332" width="587" height="1" fill="#000" fill-opacity="0.6"/>
<text x="3.4999999999999996" y="328" font-size="6.5" fill="#505050" stroke="#505050" stroke-width="0.04" font-weight="normal" font-family="Liberation Sans" textLength="6.199999999999999" lengthAdjust="spacingAndGlyphs" >14</text>
<text x="14" y="327.8" font-size="7.4" fill="#505050"  font-weight="normal" font-family="Liberation Sans" textLength="55" lengthAdjust="spacing" >6.nısnıJıuıÚuńu</text>
<rect x="0" y="348" width="12" height="1" fill="#d2d2d2" />
<rect x="13" y="348" width="587" height="1" fill="#000" fill-opacity="0.6"/>
<text x="3.4999999999999996" y="344" font-size="6.5" fill="#505050" stroke="#505050" stroke-width="0.04" font-weight="normal" font-family="Liberation Sans" textLength="6.199999999999999" lengthAdjust="spacingAndGlyphs" >15</text>
<text x="14" y="343.8" font-size="7.4" fill="#505050"  font-weight="normal" font-family="Liberation Sans" textLength="55" lengthAdjust="spacing" >6.nısnıJıuıÚuńu</text>
<rect x="0" y="364" width="12" height="1" fill="#d2d2d2" />
<rect x="13" y="364" width="587" height="1" fill="#000" fill-opacity="0.6"/>
<text x="3.4999999999999996" y="360" font-size="6.5" fill="#505050" stroke="#505050" stroke-width="0.04" font-weight="normal" font-family="Liberation Sans" textLength="6.199999999999999" lengthAdjust="spacingAndGlyphs" >16</text>
<text x="14" y="359.8" font-size="7.4" fill="#505050"  font-weight="normal" font-family="Liberation Sans" textLength="55" lengthAdjust="spacing" >6.nısnıJıuıÚuńu</text>
<rect x="0" y="380" width="12" height="1" fill="#d2d2d2" />
<rect x="13" y="380" width="587" height="1" fill="#000" fill-opacity="0.6"/>
<text x="3.4999999999999996" y="376" font-size="6.5" fill="#505050" stroke="#505050" stroke-width="0.04" font-weight="normal" font-family="Liberation Sans" textLength="6.199999999999999" lengthAdjust="spacingAndGlyphs" >17</text>
<text x="14" y="375.8" font-size="7.4" fill="#505050"  font-weight="normal" font-family="Liberation Sans" textLength="55" lengthAdjust="spacing" >6.nısnıJıuıÚuńu</text>
<rect x="0" y="396" width="12" height="1" fill="#d2d2d2" />
<rect x="13" y="396" width="587" height="1" fill="#000" fill-opacity="0.6"/>
<text x="3.4999999999999996" y="392" font-size="6.5" fill="#505050" stroke="#505050" stroke-width="0.04" font-weight="normal" font-family="Liberation Sans" textLength="6.199999999999999" lengthAdjust="spacingAndGlyphs" >18</text>
<text x="14" y="391.8" font-size="7.4" fill="#505050"  font-weight="normal" font-family="Liberation Sans" textLength="55" lengthAdjust="spacing" >6.nısnıJıuıÚuńu</text>
<text x="3.4999999999999996" y="408" font-size="6.5" fill="#505050" stroke="#505050" stroke-width="0.04" font-weight="normal" font-family="Liberation Sans" textLength="6.199999999999999" lengthAdjust="spacingAndGlyphs" >19</text>
<text x="14" y="407.8" font-size="7.4" fill="#505050"  font-weight="normal" font-family="Liberation Sans" textLength="55" lengthAdjust="spacing" >6.nısnıJıuıÚuńu</text>
<rect x="162" y="109" width="1" height="296" fill="#000" fill-opacity="0.6"/>
<rect x="204" y="109" width="1" height="296" fill="#000" fill-opacity="0.6"/>
<rect x="247" y="109" width="1" height="296" fill="#000" fill-opacity="0.6"/>
<rect x="435" y="109" width="1" height="296" fill="#000" fill-opacity="0.6"/>
<rect x="599" y="109" width="1" height="296" fill="#000" fill-opacity="0.6"/>
<rect x="789" y="109" width="1" height="296" fill="#c8c8c8" />
<text x="68" y="119.9" font-size="7.2" fill="#4a3c00"  font-weight="normal" font-family="Liberation Sans" textLength="38.5" lengthAdjust="spacing" >ńoúónúoń 6</text>
<text x="164" y="119.9" font-size="7.2" fill="#4a3c00"  font-weight="normal" font-family="Liberation Sans" textLength="39" lengthAdjust="spacing" >s:ńuńıúo 6</text>
<text x="205.5" y="119.9" font-size="7.2" fill="#4a3c00"  font-weight="normal" font-family="Liberation Sans" textLength="40.0" lengthAdjust="spacing" >úıvúnúoń 6</text>
<text x="251" y="119.9" font-size="7.2" fill="#4a3c00"  font-weight="normal" font-family="Liberation Sans" textLength="181" lengthAdjust="spacing" >n:ııuuwnńnssunısUńúńJıuvśoaussnu: 100% (nśJń 2)</text>
<text x="439" y="119.9" font-size="7.2" fill="#4a3c00"  font-weight="normal" font-family="Liberation Sans" textLength="158" lengthAdjust="spacing" >n:ııuuwnńnssunısUńúńJıuvśoaussnu: (nśJń 2)</text>
<rect x="790" y="99" width="10" height="306" fill="#e9e9e9" />
<rect x="791.5" y="101.5" width="6.5" height="6" fill="#fff" stroke="#c8c8c8" stroke-width="1"/>
<path d="M793.2 106 L794.75 104 L796.3 106z" fill="#666"/>
<rect x="791.5" y="108.5" width="6.5" height="7" fill="#fff" stroke="#c8c8c8" stroke-width="1"/>
<rect x="791.5" y="398.5" width="6.5" height="6" fill="#fff" stroke="#c8c8c8" stroke-width="1"/>
<path d="M793.2 400.5 L794.75 402.5 L796.3 400.5z" fill="#666"/>
<rect x="0" y="405" width="800" height="14" fill="#e6e6e6" />
<rect x="0" y="405" width="800" height="0.9" fill="#c2c2c2" />
<path d="M16 410.5 L14 412 L16 413.5z" fill="#c0c0c0"/><path d="M28 410.5 L30 412 L28 413.5z" fill="#c0c0c0"/>
<rect x="50.2" y="407" width="0.9" height="10" fill="#bdbdbd" />
<text x="56.65" y="413.9" font-size="6.3" fill="#444" stroke="#444" stroke-width="0.07" font-weight="normal" font-family="Liberation Sans" textLength="25.35" lengthAdjust="spacingAndGlyphs" >Program</text>
<rect x="88.5" y="405" width="27" height="13" fill="#fff" />
<rect x="88.5" y="416.8" width="27" height="1.2" fill="#217346" />
<text x="94.6" y="413.9" font-size="6.3" fill="#217346" stroke="#217346" stroke-width="0.2" font-weight="bold" font-family="Liberation Sans" textLength="14.0" lengthAdjust="spacingAndGlyphs" >Data</text>
<text x="121.75" y="413.9" font-size="6.3" fill="#444" stroke="#444" stroke-width="0.07" font-weight="normal" font-family="Liberation Sans" textLength="25.349999999999994" lengthAdjust="spacingAndGlyphs" >Datasum</text>
<rect x="154.2" y="407" width="0.9" height="10" fill="#bdbdbd" />
<circle cx="174.6" cy="412" r="3.6" fill="none" stroke="#8a8a8a" stroke-width="0.8"/><circle cx="174.6" cy="412" r="1.6" fill="#8a8a8a"/>
<rect x="480.5" y="409" width="0.8" height="7" fill="#c0c0c0" />
<rect x="488" y="408.5" width="302" height="8" fill="#d9d9d9" />
<rect x="488.5" y="409" width="7" height="6.5" fill="#fff" stroke="#c8c8c8" stroke-width="0.8"/>
<path d="M493 410.8 L491 412.25 L493 413.7z" fill="#444"/>
<rect x="758.5" y="409" width="23" height="6.5" fill="#fff" stroke="#c8c8c8" stroke-width="0.8"/>
<rect x="782" y="409" width="7" height="6.5" fill="#fff" stroke="#c8c8c8" stroke-width="0.8"/>
<path d="M784.6 410.8 L786.6 412.25 L784.6 413.7z" fill="#444"/>
<rect x="0" y="419" width="800" height="11" fill="#f0f0f0" />
<rect x="0" y="418.5" width="800" height="1" fill="#dadada" />
<text x="3.75" y="426.6" font-size="6" fill="#555" stroke="#555" stroke-width="0.07" font-weight="normal" font-family="Liberation Sans" textLength="15.350000000000001" lengthAdjust="spacingAndGlyphs" >Ready</text>
<g transform="translate(29,421)"><rect x="0.5" y="1" width="6.5" height="5.5" fill="#fff" stroke="#8a8a8a" stroke-width="0.7"/><path d="M0.5 3.5 H7 M3.75 1 V6.5" stroke="#8a8a8a" stroke-width="0.6"/><rect x="0.5" y="0" width="2.5" height="2" fill="#8a8a8a"/></g>
<rect x="654" y="419" width="19" height="11" fill="#d4d4d4" />
<g transform="translate(659.5,421)"><rect x="0.5" y="0.5" width="7" height="6" fill="none" stroke="#707070" stroke-width="0.7"/><path d="M0.5 2.5 H7.5 M0.5 4.5 H7.5 M2.8 0.5 V6.5 M5.2 0.5 V6.5" stroke="#707070" stroke-width="0.5"/></g>
<g transform="translate(678.5,421)"><rect x="0.5" y="0.5" width="7" height="6" fill="none" stroke="#8a8a8a" stroke-width="0.7"/><path d="M2.3 0.5 V6.5 M5.7 0.5 V6.5 M2.3 1.8 H5.7 M2.3 5.2 H5.7" stroke="#8a8a8a" stroke-width="0.5"/></g>
<g transform="translate(697.5,421)"><rect x="0.5" y="0.5" width="7" height="6" fill="none" stroke="#8a8a8a" stroke-width="0.7"/><path d="M4 0.5 V3.5 H7.5" fill="none" stroke="#8a8a8a" stroke-width="0.6"/></g>
<rect x="713" y="424" width="4" height="0.9" fill="#444" />
<rect x="719" y="424" width="49" height="0.7" fill="#a8a8a8" />
<rect x="742.5" y="421.5" width="2" height="5.5" fill="#5a5a5a" />
<rect x="770" y="424" width="5" height="0.9" fill="#444" />
<rect x="772" y="422" width="0.9" height="5" fill="#444" />
<text x="783" y="426.6" font-size="5.5" fill="#555" stroke="#555" stroke-width="0.07" font-weight="normal" font-family="Liberation Sans" textLength="13" lengthAdjust="spacingAndGlyphs" >100%</text>
<rect x="0" y="430" width="800" height="20" fill="#1f3440" />
<g transform="translate(8,436)"><path d="M0 1.2 L3.9 0.65 V4.1 H0z M4.5 0.55 L8.5 0 V4.1 H4.5z M0 4.7 H3.9 V8.15 L0 7.6z M4.5 4.7 H8.5 V8.7 L4.5 8.15z" fill="#fff"/></g>
<g transform="translate(32,435)"><circle cx="6" cy="4" r="3" fill="none" stroke="#fff" stroke-width="0.9"/><path d="M3.8 6.2 L0.6 9.4" stroke="#fff" stroke-width="1.1"/></g>
<g transform="translate(55,434)"><circle cx="6.5" cy="6.5" r="6.3" fill="#1c7fd1"/>
<path d="M0.6 7.5 C1 2.5 6 0 10 2 C12.5 3.5 13 6.5 11.5 8 C10 9 7.5 9 6 8 C5 7 6 5.5 8 6 C6.5 4 2.5 4 0.6 7.5z" fill="#44c78f"/>
<path d="M3 9.5 C5 13 10 12.5 12 10 C9 11 6 11 3 9.5z" fill="#0a4f9c"/></g>
<g transform="translate(80,435)"><path d="M0 0.5 H4.5 L5.5 2 H12.5 V11 H0z" fill="#e9ad27"/><rect x="0" y="3" width="12.5" height="8" fill="#ffd35c"/><rect x="3.5" y="6" width="5.5" height="3" fill="#2a86d6"/></g>
<rect x="76" y="448" width="21" height="2" fill="#7fb6e6" />
<g transform="translate(105,435)"><rect width="11" height="11" fill="#f5d02b"/><path d="M11 6 L6 11 H11z" fill="#373a2a"/></g>
<g transform="translate(129,434)"><ellipse cx="5.5" cy="7" rx="5.3" ry="4.3" fill="#d2e2ee"/><circle cx="3" cy="6" r="1.1" fill="#e03a3a"/><circle cx="5.2" cy="4.6" r="1.1" fill="#36a34a"/><circle cx="3.5" cy="8.6" r="1.1" fill="#2f77d1"/><path d="M6 9 L11.5 0.5" stroke="#e3983a" stroke-width="1.3"/></g>
<g transform="translate(153,434)"><path d="M4 0.5 L11 1.8 L9 11.8 L2 10.5z" fill="#b88a3a"/><path d="M3.5 0.3 L10.3 1.6 L8.3 11.3 L1.5 10z" fill="#e9f4f8"/><path d="M1.5 10 L3.5 0.3 L6 0.8 L3 10.3z" fill="#49aebf"/><path d="M3 5 L8 6 L7 10.5 L2.5 9.8z" fill="#8fd0dc" opacity="0.6"/></g>
<g transform="translate(179,434)"><rect width="10" height="12" rx="0.5" fill="#5d6673"/><rect x="1.2" y="1" width="7.6" height="2.2" fill="#4fd6f2"/><g fill="#eef2f5"><rect x="1.2" y="4.3" width="2" height="1.7"/><rect x="4" y="4.3" width="2" height="1.7"/><rect x="6.8" y="4.3" width="2" height="1.7"/><rect x="1.2" y="6.8" width="2" height="1.7"/><rect x="4" y="6.8" width="2" height="1.7"/><rect x="1.2" y="9.3" width="2" height="1.7"/><rect x="4" y="9.3" width="2" height="1.7"/></g><rect x="6.8" y="6.8" width="2" height="4.2" fill="#2f5fa8"/></g>
<g transform="translate(203,434)"><circle cx="6" cy="6" r="5.8" fill="#db4437"/><path d="M6 6 L11.02 8.9 A5.8 5.8 0 0 1 0.98 8.9z" fill="#0f9d58"/><path d="M6 6 L11.8 6 A5.8 5.8 0 0 1 8.9 11.02z" fill="#ffcd40"/><circle cx="6" cy="6" r="2.7" fill="#fff"/><circle cx="6" cy="6" r="2.1" fill="#4285f4"/></g>
<rect x="199" y="448" width="20" height="2" fill="#7fb6e6" />
<rect x="221" y="430" width="24" height="20" fill="#45545f" />
<g transform="translate(227,434)"><rect x="4" y="0.5" width="9" height="11" fill="#fff"/><path d="M6 3 H12 M6 5 H12 M6 7 H12 M6 9 H12 M9 1 V11" stroke="#217346" stroke-width="0.7"/><rect x="0" y="2" width="8" height="8" fill="#1d6f42"/><path d="M2 3.8 L6 8.2 M6 3.8 L2 8.2" stroke="#fff" stroke-width="1.1"/></g>
<rect x="221" y="448" width="24" height="2" fill="#7fb6e6" />
<g transform="translate(252,434)"><rect width="12" height="12" rx="2.5" fill="#06c755"/><ellipse cx="6" cy="5.6" rx="4.3" ry="3.4" fill="#fff"/><path d="M4 8 L4.5 10.5 L7 8.5z" fill="#fff"/><path d="M3.2 4.5 V6.5 H4 M5 4.5 V6.5 M6 6.5 V4.5 L7.2 6.5 V4.5 M8.8 4.5 H8 V6.5 H8.8 M8 5.5 H8.8" stroke="#06c755" stroke-width="0.5" fill="none"/></g>
<rect x="247" y="448" width="21" height="2" fill="#7fb6e6" />
<g transform="translate(276,434)"><rect width="12" height="12" rx="1.5" fill="#1a8bd4"/><path d="M3.5 3 H8.5 L3.5 9 H8.5" stroke="#fff" stroke-width="1.5" fill="none"/></g>
<rect x="272" y="448" width="20" height="2" fill="#7fb6e6" />
<g transform="translate(678,437)"><path d="M0.5 3.5 L3.5 0.5 L6.5 3.5" fill="none" stroke="#fff" stroke-width="0.9"/></g>
<g transform="translate(689,436.5)"><rect width="8" height="8" fill="#1a8bd4"/><path d="M2.3 2 H5.7 L2.3 6 H5.7" stroke="#fff" stroke-width="1" fill="none"/></g>
<g transform="translate(702,436)"><rect x="1.5" y="0.5" width="6" height="4.5" fill="none" stroke="#fff" stroke-width="0.8"/><path d="M4.5 5 V7.5 M2.5 7.5 H6.5 M0.5 1 V4" stroke="#fff" stroke-width="0.8"/></g>
<g transform="translate(713,436)"><path d="M0.5 2.8 H2 L4 1 V7 L2 5.2 H0.5z" fill="none" stroke="#fff" stroke-width="0.7"/><path d="M5.3 2.5 Q6.3 4 5.3 5.5 M6.5 1.5 Q8 4 6.5 6.5" fill="none" stroke="#fff" stroke-width="0.6"/></g>
<g transform="translate(727,436)"><circle cx="1" cy="1" r="0.8" fill="#fff"/></g>
<text x="729" y="441.5" font-size="5" fill="#fff" stroke="#fff" stroke-width="0.07" font-weight="normal" font-family="Liberation Sans" textLength="7.5" lengthAdjust="spacingAndGlyphs" >lns</text>
<text x="746.2" y="437.8" font-size="6" fill="#fff" stroke="#fff" stroke-width="0.07" font-weight="normal" font-family="Liberation Sans" textLength="21.799999999999955" lengthAdjust="spacingAndGlyphs" >8:37 AM</text>
<text x="742.8" y="446.5" font-size="6" fill="#fff" stroke="#fff" stroke-width="0.07" font-weight="normal" font-family="Liberation Sans" textLength="28.200000000000045" lengthAdjust="spacingAndGlyphs" >24-Aug-20</text>
<g transform="translate(779,436)"><path d="M0.5 0.5 H9.5 V6.5 H4.5 L2.5 8.5 V6.5 H0.5z" fill="none" stroke="#fff" stroke-width="0.8"/><path d="M2.5 2.5 H7.5 M2.5 4.5 H7.5" stroke="#fff" stroke-width="0.6"/></g>
<circle cx="787" cy="443" r="3.6" fill="#2b2b2b" stroke="#d0d0d0" stroke-width="0.5"/>
<text x="785.6" y="445" font-size="5" fill="#fff" stroke="#fff" stroke-width="0.07" font-weight="normal" font-family="Liberation Sans" textLength="2.8999999999999773" lengthAdjust="spacingAndGlyphs" >3</text>
<rect x="797.5" y="430" width="0.8" height="20" fill="#4a5563" />
<defs><filter id="sh" x="-10%" y="-50%" width="120%" height="200%"><feGaussianBlur stdDeviation="3"/></filter></defs>
<rect x="158" y="201" width="494" height="60" fill="rgba(0,0,0,0.22)" filter="url(#sh)"/>
<rect x="159.5" y="200.5" width="489" height="56.5" fill="#f0f0f0" stroke="#7e7e7e" stroke-width="1"/>
<rect x="160" y="201" width="488" height="14" fill="#fff" />
<text x="164" y="210" font-size="6.6" fill="#333" stroke="#333" stroke-width="0.07" font-weight="normal" font-family="Liberation Sans" textLength="40" lengthAdjust="spacingAndGlyphs" >Microsoft Excel</text>
<path d="M638.3 205.2 L643.8 210.2 M643.8 205.2 L638.3 210.2" stroke="#333" stroke-width="0.8"/>
<path d="M176.5 222.3 L184.5 237.8 H168.5z" fill="#fcd116" stroke="#e8b800" stroke-width="0.5"/>
<rect x="175.8" y="227" width="1.4" height="6.5" fill="#111" />
<rect x="175.8" y="234.6" width="1.4" height="1.4" fill="#111" />
<text x="192.5" y="229" font-size="5.6" fill="#1f1f1f" stroke="#1f1f1f" stroke-width="0.07" font-weight="normal" font-family="Liberation Sans" textLength="447.5" lengthAdjust="spacingAndGlyphs" >The Visual Basic for Applications (VBA) macros in this workbook are corrupted and have been deleted. The macro corruption most likely exists in the current file. To recover the</text>
<text x="192.5" y="235.5" font-size="5.6" fill="#1f1f1f" stroke="#1f1f1f" stroke-width="0.07" font-weight="normal" font-family="Liberation Sans" textLength="142.7" lengthAdjust="spacingAndGlyphs" >macros, open a backup copy of this file if you have one.</text>
<rect x="388.5" y="243.5" width="32" height="10" fill="#e5f1fb" stroke="#3d8ee0" stroke-width="0.9"/>
<text x="400.5" y="250.5" font-size="6" fill="#222" stroke="#222" stroke-width="0.07" font-weight="normal" font-family="Liberation Sans" textLength="8.0" lengthAdjust="spacingAndGlyphs" >OK</text>
</svg>
</body></html>
